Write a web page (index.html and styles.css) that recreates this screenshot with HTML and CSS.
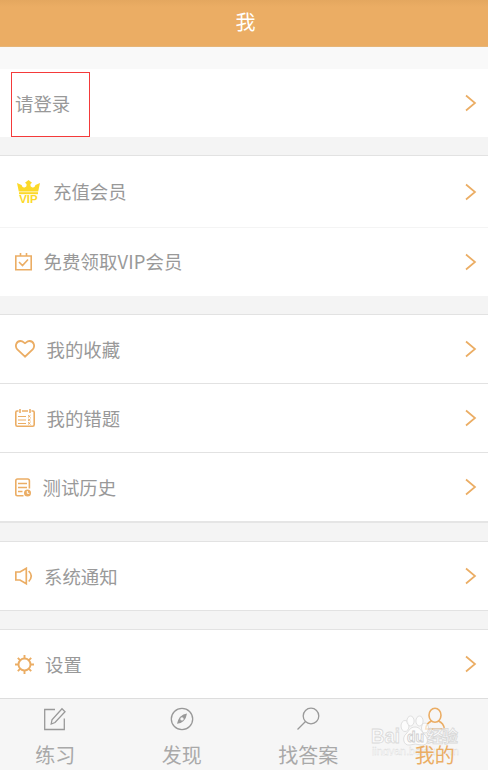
FILE: index.html
```html
<!DOCTYPE html>
<html lang="zh-CN">
<head>
    <meta charset="UTF-8">
    <meta name="viewport" content="width=device-width, initial-scale=1.0">
    <title>我</title>
    <link rel="stylesheet" href="styles.css">
</head>
<body>
    <header class="header">我</header>

    <main class="content">
        <section class="group login">
            <a class="row">
                <span class="login-box">请登录</span>
                <svg class="arrow" viewBox="0 0 12 18"><path d="M1 1.5L10 9L1 16.5"/></svg>
            </a>
        </section>

        <section class="group vip">
            <a class="row row-vip">
                <svg class="icon crown" width="24" height="24" viewBox="0 0 24 24">
                    <path d="M1.8 11.5L0 3L4.5 5Q5.5 8 7.5 7.5Q10 7 9.5 4L8 2.8L11.5 0L15 2.8L13.5 4Q13 7 15.5 7.5Q17.5 8 18.5 5L23 3L21.2 11.5Z"/>
                    <path d="M2 12.2H21V14.2H2Z"/>
                    <text x="2.2" y="23.2" textLength="18.5" lengthAdjust="spacingAndGlyphs">VIP</text>
                </svg>
                <span class="label">充值会员</span>
                <svg class="arrow" viewBox="0 0 12 18"><path d="M1 1.5L10 9L1 16.5"/></svg>
            </a>
            <a class="row">
                <svg class="icon" width="17" height="18" viewBox="0 0 17 18">
                    <path d="M.8 3H16.2V16.8H.8ZM5.5 0V3M11.5 0V3M4 9L7.5 12.5L13 6.5"/>
                </svg>
                <span class="label label-free">免费领取VIP会员</span>
                <svg class="arrow" viewBox="0 0 12 18"><path d="M1 1.5L10 9L1 16.5"/></svg>
            </a>
        </section>

        <section class="group study">
            <a class="row">
                <svg class="icon heart" width="20" height="18" viewBox="0 0 20 18">
                    <path d="M10 16.7L2.3 9.3C-.2 6.7 .7 1 5.5 1C8 1 9 2.8 10 3.3C11 2.8 12 1 14.5 1C19.3 1 20.2 6.7 17.7 9.3Z"/>
                </svg>
                <span class="label">我的收藏</span>
                <svg class="arrow" viewBox="0 0 12 18"><path d="M1 1.5L10 9L1 16.5"/></svg>
            </a>
            <a class="row">
                <svg class="icon" width="20" height="18" viewBox="0 0 20 18">
                    <path d="M3.5 2H2Q.8 2 .8 3.5V15.5Q.8 17.2 2.3 17.2H17.7Q19.2 17.2 19.2 15.5V3.5Q19.2 2 18 2H16.5M7 2H13M5 0V4M15 0V4"/>
                    <path class="thin" d="M3 7.5H11M3 11H11M3 14.5H11M13 6.2L15.5 8.5M15.5 6.2L13 8.5M13 9.8L15.5 12M15.5 9.8L13 12M13 13.2L15.5 15.5M15.5 13.2L13 15.5"/>
                </svg>
                <span class="label">我的错题</span>
                <svg class="arrow" viewBox="0 0 12 18"><path d="M1 1.5L10 9L1 16.5"/></svg>
            </a>
            <a class="row">
                <svg class="icon" width="16" height="19" viewBox="0 0 16 19">
                    <path d="M8.5 17.7H2.5Q.8 17.7 .8 16V3Q.8 1 2.5 1H12.7Q14.4 1 14.4 3V10.5M3 5.5H12M3 9.5H12M3 13.5H7.5"/>
                    <circle class="solid" cx="12.5" cy="15" r="3.5"/>
                    <path class="hand" d="M12.3 13V15.3H14.3"/>
                </svg>
                <span class="label">测试历史</span>
                <svg class="arrow" viewBox="0 0 12 18"><path d="M1 1.5L10 9L1 16.5"/></svg>
            </a>
        </section>

        <section class="group notice">
            <a class="row">
                <svg class="icon speaker" width="18" height="19" viewBox="0 0 18 19">
                    <path d="M.8 5H5L11.3 1.3V16.7L5 13H.8ZM13.7 4Q18.8 9 13.7 14.5"/>
                </svg>
                <span class="label">系统通知</span>
                <svg class="arrow" viewBox="0 0 12 18"><path d="M1 1.5L10 9L1 16.5"/></svg>
            </a>
        </section>

        <section class="group settings">
            <a class="row">
                <svg class="icon gear" width="19" height="19" viewBox="0 0 19 19">
                    <circle cx="9.5" cy="9.5" r="6"/>
                    <path d="M9.5 0V3.5M9.5 15.5V19M0 9.5H3.5M15.5 9.5H19M2.8 2.8L5.3 5.3M13.7 13.7L16.2 16.2M2.8 16.2L5.3 13.7M13.7 5.3L16.2 2.8"/>
                </svg>
                <span class="label">设置</span>
                <svg class="arrow" viewBox="0 0 12 18"><path d="M1 1.5L10 9L1 16.5"/></svg>
            </a>
        </section>
    </main>

    <nav class="tabs">
        <a class="tab">
            <svg viewBox="0 0 24 24"><path d="M12 2.5H1.7V22.5H21.3V11.5M8.2 17L9 12.7L19 1.8L22 4.7L12 15.5Z"/></svg>
            <span>练习</span>
        </a>
        <a class="tab">
            <svg viewBox="0 0 24 24">
                <circle cx="12" cy="12" r="10.7"/>
                <path class="needle" fill-rule="evenodd" d="M17 6.5Q9 7.5 7 16.8Q15.5 16 17 6.5ZM12 10.2A1.7 1.7 0 1 1 12 13.6A1.7 1.7 0 1 1 12 10.2Z"/>
            </svg>
            <span>发现</span>
        </a>
        <a class="tab">
            <svg viewBox="0 0 24 24"><circle cx="15" cy="9" r="7.8"/><path d="M9.5 14.5L1.5 22.5"/></svg>
            <span>找答案</span>
        </a>
        <a class="tab active">
            <svg viewBox="0 0 24 24"><ellipse cx="12" cy="8.3" rx="6" ry="7"/><path d="M8.8 14C4.5 15.5 3 18 2.7 22H21.3C21 18 19.5 15.5 15.2 14"/></svg>
            <span>我的</span>
        </a>
    </nav>

    <svg class="watermark" width="100" height="50" viewBox="0 0 100 50">
        <g class="paw">
            <ellipse cx="35" cy="20" rx="4" ry="5.5"/>
            <ellipse cx="40.5" cy="15" rx="3.6" ry="5"/>
            <ellipse cx="49.5" cy="15" rx="3.6" ry="5"/>
            <ellipse cx="55" cy="22" rx="3.5" ry="5"/>
            <path d="M45 21C40 21 39 25 36 28C32 31 33 40 40 39Q45 37 51 39C59 40 59 32 54 28C51 25 50 21 45 21Z"/>
        </g>
        <text class="mark" x="1" y="37" textLength="29" lengthAdjust="spacingAndGlyphs">Bai</text>
        <text class="du" x="37" y="36">du</text>
        <text class="mark cn" x="57" y="36" textLength="31">经验</text>
        <text class="url" x="2" y="49" textLength="87">jingyan.baidu.com</text>
    </svg>
</body>
</html>
```

FILE: styles.css
```css
* {
    box-sizing: border-box;
}
body {
    margin: 0;
    height: 770px;
    position: relative;
    display: flex;
    flex-direction: column;
    overflow: hidden;
    background-color: #f4f4f4;
    color: #999;
    font-family: "Noto Sans CJK SC", sans-serif;
    font-size: 18.4px;
}
.header {
    height: 47px;
    padding: 0 0 4px 3px;
    display: flex;
    align-items: center;
    justify-content: center;
    background: linear-gradient(#e4a75f, #ebad64 7px);
    border-bottom: 1px solid #e6b578;
    color: #fff;
    font-size: 20px;
}
.content {
    flex: 1;
}
.group {
    background-color: #fff;
    border-top: 1px solid #e2e2e2;
    margin-bottom: 18px;
}
.login {
    border-top: 22px solid #f9f9f9;
}
.row {
    height: 68px;
    padding: 0 11px 0 15px;
    display: flex;
    align-items: center;
}
.row + .row {
    border-top: 1px solid #e2e2e2;
    height: 69px;
}
.login .row {
    padding-left: 11px;
}
.login-box {
    width: 79px;
    height: 65px;
    margin-top: 3px;
    padding: 0 0 4px 3px;
    display: flex;
    align-items: center;
    border: 1px solid #f43a3a;
}
.vip .row-vip {
    height: 71px;
    padding-left: 17px;
}
.vip .row + .row {
    border-color: #f4f4f4;
}
.study .row:last-child {
    height: 71px;
    border-bottom: 2px solid #e5e5e5;
}
.notice .row {
    height: 69px;
    border-bottom: 1px solid #e2e2e2;
}
.settings {
    margin-bottom: 0;
}
.label {
    margin-left: 12px;
    line-height: 28px;
}
.vip .label {
    padding-bottom: 2px;
}
.study .label {
    margin-left: 11.5px;
}
.notice .label,
.settings .label {
    margin-left: 11px;
}
.vip .label-free {
    margin-left: 11.5px;
    letter-spacing: .12px;
}
.icon {
    fill: none;
    stroke: #ebad64;
    stroke-width: 1.6;
}
.heart {
    stroke-width: 1.8;
}
.icon .thin {
    stroke-width: 1;
}
.icon .solid {
    fill: #ebad64;
    stroke: none;
}
.icon .hand {
    stroke: #fff;
    stroke-width: 1;
}
.crown {
    fill: #fcd928;
    stroke: none;
    font: bold 10px "Liberation Sans", sans-serif;
}
.speaker {
    stroke-width: 1.7;
}
.gear {
    stroke-width: 1.9;
}
.arrow {
    width: 12px;
    height: 18px;
    margin-left: auto;
    fill: none;
    stroke: #ebad64;
    stroke-width: 1.7;
}
.tabs {
    height: 72px;
    width: 506px;
    margin-left: -8px;
    padding-top: 8px;
    display: grid;
    grid-template-columns: repeat(4, 126.5px);
    background-color: #f6f6f6;
    border-top: 1px solid #ddd;
    color: #a9a9a9;
    font-size: 20px;
}
.tab {
    display: flex;
    flex-direction: column;
    align-items: center;
    line-height: 30px;
}
.tab span {
    position: relative;
    z-index: 1;
}
.tab svg {
    width: 24px;
    height: 24px;
    margin-bottom: 9px;
    fill: none;
    stroke: #999;
    stroke-width: 1.3;
}
.tab .needle {
    fill: #999;
    stroke: none;
}
.tab.active {
    color: #ebad64;
}
.tab.active svg {
    stroke: #ebad64;
    stroke-width: 1.6;
}
.watermark {
    position: absolute;
    left: 370px;
    top: 706px;
    fill: rgba(255, 255, 255, .65);
    stroke: #d8d8d8;
    stroke-width: .8;
    font-family: "Liberation Sans", "Noto Sans CJK SC", sans-serif;
}
.mark {
    font-size: 20px;
    font-weight: bold;
}
.cn {
    font-size: 16px;
}
.du {
    font-size: 14px;
    font-weight: bold;
    stroke: #cecece;
}
.url {
    font-size: 11px;
    stroke-width: .3;
}
```
